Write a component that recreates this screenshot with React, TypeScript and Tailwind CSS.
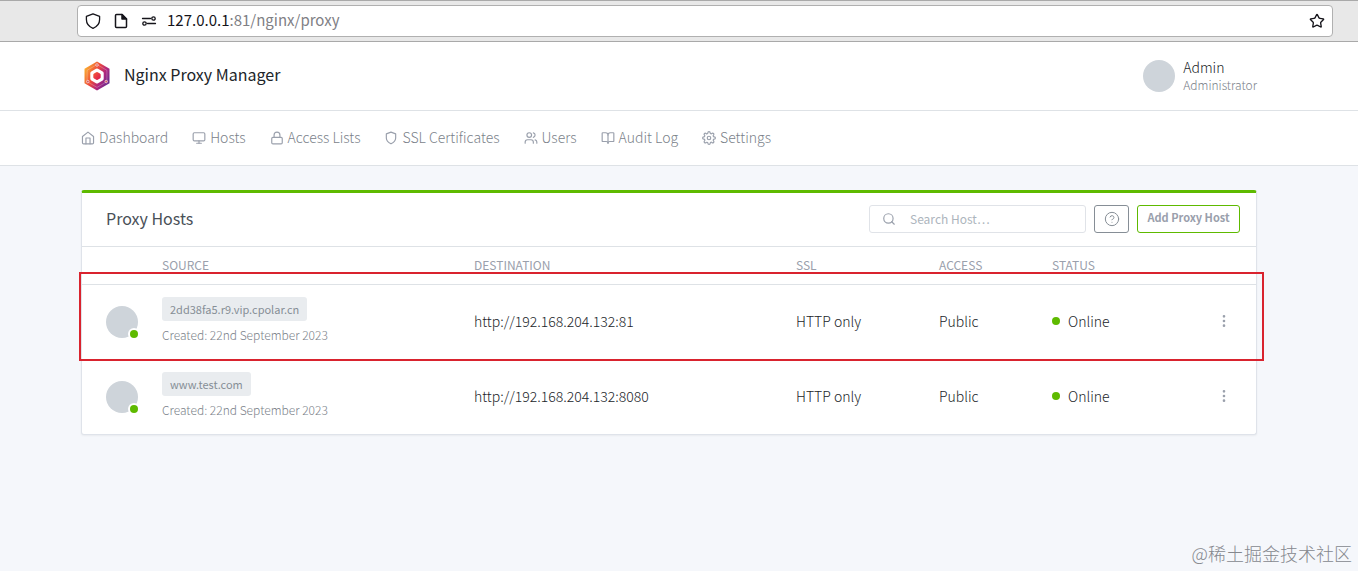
import React from "react";
import {
  BookOpen,
  CircleHelp,
  Lock,
  Monitor,
  MoreVertical,
  Search,
  Star,
  Users,
} from "lucide-react";

const svgBase = {
  viewBox: "0 0 24 24",
  fill: "none",
  stroke: "currentColor",
  strokeWidth: 2,
  strokeLinecap: "round" as const,
  strokeLinejoin: "round" as const,
  "aria-hidden": true,
};

function HomeIcon({ className }: { className?: string }) {
  return (
    <svg {...svgBase} className={className}>
      <path d="M2.500 9.500 12 2l9.500 7.500V20a2 2 0 0 1-2 2h-15a2 2 0 0 1-2-2z" />
      <path d="M8.500 22V12h7v10" />
    </svg>
  );
}

function ShieldIcon({ className }: { className?: string }) {
  return (
    <svg {...svgBase} className={className}>
      <path d="M12 22s8-4 8-10V5l-8-3-8 3v7c0 6 8 10 8 10z" />
    </svg>
  );
}

function GearIcon({ className }: { className?: string }) {
  return (
    <svg {...svgBase} className={className}>
      <circle cx="12" cy="12" r="3" />
      <path d="M19.4 15a1.65 1.65 0 0 0 .33 1.82l.06.06a2 2 0 1 1-2.83 2.83l-.06-.06a1.65 1.65 0 0 0-2.8 1.17V21a2 2 0 1 1-4 0v-.09A1.65 1.65 0 0 0 9 19.4a1.65 1.65 0 0 0-1.82.33l-.06.06a2 2 0 1 1-2.83-2.83l.06-.06A1.65 1.65 0 0 0 3.1 14H3a2 2 0 1 1 0-4h.09A1.65 1.65 0 0 0 4.6 9a1.65 1.65 0 0 0-.33-1.82l-.06-.06a2 2 0 1 1 2.83-2.83l.06.06A1.65 1.65 0 0 0 10 3.09V3a2 2 0 1 1 4 0v.09a1.65 1.65 0 0 0 2.82 1.24l.06-.06a2 2 0 1 1 2.83 2.83l-.06.06A1.65 1.65 0 0 0 20.91 10H21a2 2 0 1 1 0 4h-.09a1.65 1.65 0 0 0-1.51 1z" />
    </svg>
  );
}

function Logo() {
  return (
    <svg viewBox="0 0 26 30" className="h-[30px] w-[26px] shrink-0" aria-hidden>
      <defs>
        <linearGradient id="logo-a" x1="0" y1="0.2" x2="1" y2="0.8">
          <stop offset="0" stopColor="#fbb62f" />
          <stop offset="0.4" stopColor="#ee4a3a" />
          <stop offset="0.68" stopColor="#b0267e" />
          <stop offset="1" stopColor="#5b2a91" />
        </linearGradient>
        <linearGradient id="logo-b" x1="0" y1="0" x2="1" y2="1">
          <stop offset="0" stopColor="#f0503a" />
          <stop offset="1" stopColor="#e0204e" />
        </linearGradient>
      </defs>
      <path d="M13 0.5 25.5 7.7v14.6L13 29.5 0.5 22.3V7.7z" fill="url(#logo-a)" />
      <path d="M13 3.6 22.9 9.3v11.4L13 26.4 3.1 20.7V9.3z" fill="none" stroke="#fff" strokeOpacity="0.35" strokeWidth="0.7" />
      <g fill="#d8555b" stroke="#fff" strokeOpacity="0.7" strokeWidth="0.8">
        <circle cx="13" cy="4" r="1.3" />
        <circle cx="3.8" cy="20.6" r="1.3" />
        <circle cx="22.2" cy="20.6" r="1.3" />
      </g>
      <path d="M13 9.600 17.700 12.300v5.400L13 20.400 8.300 17.700v-5.400z" fill="#fff" stroke="#fff" strokeWidth="4" strokeLinejoin="round" />
      <path d="M13 12.500 15.200 13.700v2.600L13 17.500 10.800 16.300v-2.600z" fill="url(#logo-b)" stroke="url(#logo-b)" strokeWidth="3" strokeLinejoin="round" />
    </svg>
  );
}

const navItems = [
  { label: "Dashboard", Icon: HomeIcon },
  { label: "Hosts", Icon: Monitor },
  { label: "Access Lists", Icon: Lock },
  { label: "SSL Certificates", Icon: ShieldIcon },
  { label: "Users", Icon: Users },
  { label: "Audit Log", Icon: BookOpen },
  { label: "Settings", Icon: GearIcon },
];

const hosts = [
  { domain: "2dd38fa5.r9.vip.cpolar.cn", destination: "http://192.168.204.132:81" },
  { domain: "www.test.com", destination: "http://192.168.204.132:8080" },
];

function AddressBar() {
  return (
    <div className="border-y border-[#a9a9a9] bg-[#e8e8e8] py-1 pr-[25px] pl-[77px]">
      <div className="flex h-8 items-center rounded border border-[#b0b0b0] bg-white px-[7px] text-[#15141a]">
        <svg viewBox="0 0 16 16" className="mr-3 size-4" fill="none" stroke="currentColor" strokeWidth="1.3" strokeLinejoin="round" aria-hidden>
          <path d="M8 .8 14.6 3.4V6.6C14.6 11 12 13.8 8 15.3 4 13.8 1.4 11 1.4 6.6V3.4z" />
        </svg>
        <svg viewBox="0 0 16 16" className="mr-3 size-4" fill="none" stroke="currentColor" strokeWidth="1.5" strokeLinejoin="round" aria-hidden>
          <path d="M3.5 1.5H9L13.5 6v7.5a1 1 0 0 1-1 1h-9a1 1 0 0 1-1-1v-11a1 1 0 0 1 1-1z" />
          <path d="M9 1.5V6h4.500z" fill="currentColor" />
        </svg>
        <svg viewBox="0 0 16 16" className="mr-[10px] size-4" fill="none" stroke="currentColor" strokeWidth="1.3" strokeLinecap="round" aria-hidden>
          <path d="M1.500 5.500H9.500M6.500 10.500H14.500" />
          <circle cx="12.500" cy="5.500" r="1.700" />
          <circle cx="3.500" cy="10.500" r="1.700" />
        </svg>
        <a href="#url" className="grow pb-0.5 text-[15px] text-[#808085]">
          <span className="text-[#15141a]">127.0.0.1</span>:81/nginx/proxy
        </a>
        <button aria-label="Bookmark this page">
          <Star className="size-4" strokeWidth={2} />
        </button>
      </div>
    </div>
  );
}

function Avatar({ online = false }: { online?: boolean }) {
  return (
    <span className="relative block size-8 shrink-0 rounded-full bg-[#ced4da]">
      {online && (
        <span className="absolute -right-0.5 -bottom-0.5 flex size-3 items-center justify-center rounded-full bg-white">
          <span className="size-2 rounded-full bg-[#5eba00]" />
        </span>
      )}
    </span>
  );
}

export default function App() {
  return (
    <div className="relative flex min-h-screen flex-col bg-[#f5f7fb] font-['Noto_Sans_CJK_SC',sans-serif] text-sm text-[#495057]">
      <AddressBar />

      <header className="flex h-[69px] items-center justify-between border-b border-[#dee2e6] bg-white pr-[101px] pl-[84px]">
        <a href="#home" className="flex items-center gap-[14px] text-base text-[#212529]">
          <Logo />
          <span className="pb-1">Nginx Proxy Manager</span>
        </a>
        <a href="#account" className="flex items-center gap-2">
          <Avatar />
          <span className="flex flex-col leading-[18px]">
            <span className="font-light text-[#212529]">Admin</span>
            <span className="text-xs leading-[18px] font-light text-[#7b828a]">Administrator</span>
          </span>
        </a>
      </header>

      <nav className="flex h-[55px] items-center gap-6 border-b border-[#dee2e6] bg-white pr-[101px] pl-[81px] text-[#9aa0ac]">
        {navItems.map(({ label, Icon }) => (
          <a key={label} href={`#${label}`} className="flex items-center gap-1">
            <Icon className="size-[14px]" />
            <span className="pb-0.5 font-light text-[#7b828a]">{label}</span>
          </a>
        ))}
      </nav>

      <main className="pt-6 pr-[101px] pl-[81px]">
        <section className="relative rounded-[3px] border border-t-[3px] border-[#dfe3ea] border-t-[#5eba00] bg-white shadow-[0_1px_2px_rgba(0,0,0,0.05)]">
          <div className="flex h-[54px] items-center border-b border-[#dee2e6] pr-4 pb-0.5 pl-6">
            <h1 className="grow pb-0.5 text-base">Proxy Hosts</h1>
            <label className="mr-2 flex h-7 w-[217px] items-center rounded-[3px] border border-[#e0e3e8] text-[#9aa0ac]">
              <Search className="mx-3 size-[14px] shrink-0" />
              <input
                type="text"
                aria-label="Search hosts"
                placeholder="Search Host…"
                className="min-w-0 grow pl-0.5 text-xs outline-none placeholder:text-[#adb5bd]"
              />
            </label>
            <button aria-label="Help" className="mr-2 flex h-7 w-[35px] items-center justify-center rounded-[3px] border border-[#868e96] text-[#868e96]">
              <CircleHelp className="size-4" strokeWidth={1.5} />
            </button>
            <button className="h-7 w-[103px] rounded-[3px] border border-[#5eba00] pb-0.5 text-[11px] font-bold text-[#9aa0ac]">
              Add Proxy Host
            </button>
          </div>

          <table className="w-full table-fixed text-left">
            <colgroup>
              <col className="w-[80px]" />
              <col />
              <col className="w-[322px]" />
              <col className="w-[143px]" />
              <col className="w-[113px]" />
              <col className="w-[140px]" />
              <col className="w-[64px]" />
            </colgroup>
            <thead>
              <tr className="h-[37px] border-b border-[#dee2e6] text-xs text-[#9aa0ac]">
                <th aria-label="Owner" />
                <th className="font-normal">SOURCE</th>
                <th className="font-normal">DESTINATION</th>
                <th className="font-normal">SSL</th>
                <th className="font-normal">ACCESS</th>
                <th className="font-normal">STATUS</th>
                <th aria-label="Actions" />
              </tr>
            </thead>
            <tbody className="font-light text-[#212529]">
              {hosts.map((host) => (
                <tr key={host.domain} className="h-[75px] border-b border-[#dee2e6] last:border-b-0">
                  <td className="pl-6">
                    <Avatar online />
                  </td>
                  <td className="pb-0.5">
                    <span className="inline-block rounded-[3px] bg-[#e9ecef] px-2 text-[11px] leading-6 font-normal text-[#868e96]">{host.domain}</span>
                    <div className="mt-1 text-xs leading-5 text-[#7b828a]">Created: 22nd September 2023</div>
                  </td>
                  <td className="pb-0.5">{host.destination}</td>
                  <td className="pb-0.5">HTTP only</td>
                  <td className="pb-0.5">Public</td>
                  <td className="pb-0.5">
                    <span className="flex items-center gap-2">
                      <span className="size-2 rounded-full bg-[#5eba00]" />
                      Online
                    </span>
                  </td>
                  <td className="pb-0.5">
                    <button aria-label="Host actions" className="ml-6 flex text-[#9aa0ac]">
                      <MoreVertical className="size-4" />
                    </button>
                  </td>
                </tr>
              ))}
            </tbody>
          </table>
          <div className="pointer-events-none absolute top-[79px] -right-2 -left-[3px] h-[89px] border-2 border-[#d9232e]" />
        </section>
      </main>

      <div className="absolute right-[6px] bottom-1.5 text-lg leading-6 font-light text-[#85888e]">@稀土掘金技术社区</div>
    </div>
  );
}
